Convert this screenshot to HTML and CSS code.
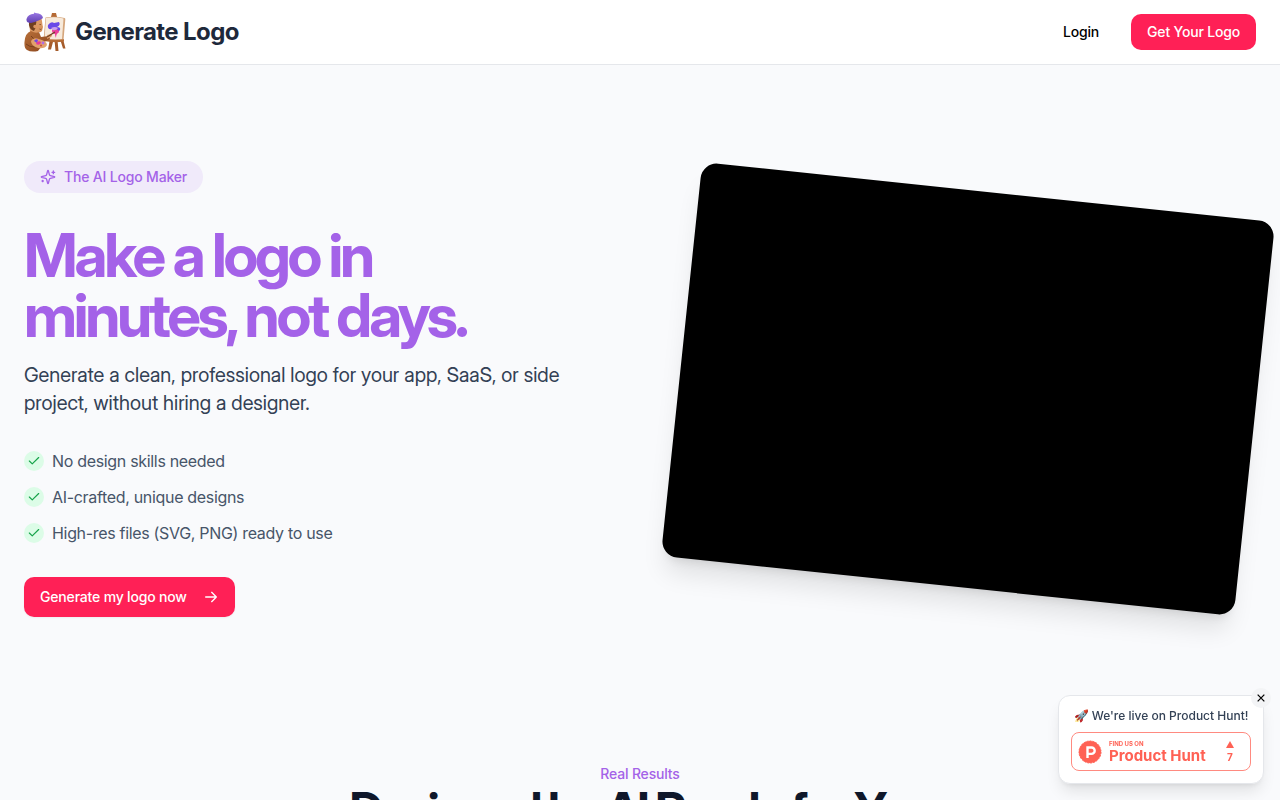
FILE: index.html
```html
<!DOCTYPE html>
<html lang="en">
<head>
<meta charset="utf-8">
<meta name="viewport" content="width=device-width, initial-scale=1">
<title>Generate Logo</title>
<link rel="stylesheet" href="styles.css">
</head>
<body>
<header class="site-header">
  <a class="brand" href="#">
    <svg class="brand-mark" viewBox="0 0 42 40" aria-hidden="true">
      <defs>
        <linearGradient id="beret" x1="0" y1="0" x2="0" y2="1"><stop offset="0" stop-color="#9a78e4"/><stop offset="1" stop-color="#5f3fb0"/></linearGradient>
        <linearGradient id="coat" x1="0" y1="0" x2="1" y2="1"><stop offset="0" stop-color="#b9713a"/><stop offset="1" stop-color="#87421b"/></linearGradient>
        <linearGradient id="skin" x1="0" y1="0" x2="1" y2="1"><stop offset="0" stop-color="#e8ac78"/><stop offset="1" stop-color="#cf8750"/></linearGradient>
      </defs>
      <path d="M27 5h5l1 6-6 1z" fill="#a3592a"/>
      <path d="M28 1h4l1 4h-6z" fill="#b56a35"/>
      <path d="M26 27l-2 10.500h3L29.500 28zM30.500 28l1 11h3l-1-11zM36 27l3 9.500h2.500L39 27z" fill="#a55c2b"/>
      <path d="M21.500 5.500Q31 4 40.500 6q1 0 .8 1.500L39.500 28q-9.500 1.800-20 0z" fill="#d5a67c"/>
      <path d="M22 6q9-1.500 17.500.5L38 27q-8.500 1-17.500-.5z" fill="#f7eadb"/>
      <path d="M20 26.500q10 2 20 .7v2.300q-10 1.500-20.500-.5z" fill="#b56b35"/>
      <path d="M24 13q3-4 6-2l5-1q2 3-2 5 4 0 3 3-2 3-5 1l-3-2q-5 1-4-4z" fill="#6949e8"/>
      <path d="M28 18q4-2 6 0t0 3q-2 1-2 5-1-2-1-4-3 0-3-4z" fill="#eb3f9a"/>
      <path d="M27 16q4-2 7 0-2 3-5 2z" fill="#c9a0eb"/>
      <path d="M5 9q2-4 8-4 5 0 5 4l.5 4 .5 2-1 4q-2 2-4 1l1 4-6 1-3-5z" fill="url(#skin)"/>
      <path d="M5 9l6-1q2 1 1 4-1 2 0 3l-2 4q-6-2-5-10z" fill="#70401f"/>
      <circle cx="11" cy="14.500" r="1.700" fill="#da9461"/>
      <path d="M15.500 12.500h1.400M15.500 17q1 .8 2 0" stroke="#64351d" stroke-width=".7" fill="none"/>
      <path d="M2.500 7Q4 2 10 1.800 10-.2 11.500 1q7 .5 7.500 5-4 3-12 5-5 0-4.500-4z" fill="url(#beret)"/>
      <path d="M7 19q5 3 8 1l2 5 8-1 1 3-8 4q-1 5-4 8-7 1.500-11-1-3-2-2.500-8Q1 21 7 19z" fill="url(#coat)"/>
      <path d="M7 24q4 3 6 8M2 32q3 3 9 3" stroke="#79401e" stroke-width="1" fill="none"/>
      <path d="M23 23l4-1q2 1 0 3l-4 2z" fill="url(#skin)"/>
      <path d="M23 25l8-5" stroke="#714124" stroke-width="1.200"/>
      <path d="M7 29q2-4 8-2 8 2 8 6-2 4-9 3-7-2-7-7z" fill="#e1a16c"/>
      <path d="M10 29q2-3 4-1l-1 3z" fill="#6f4ae5"/>
      <path d="M13 30q4-2 4 1-2 3-5 1z" fill="#e63a99"/>
      <circle cx="19" cy="31" r="1.400" fill="#b06be6"/>
      <circle cx="17" cy="33.500" r="1" fill="#cc4c3e"/>
    </svg>
    <span class="brand-name">Generate Logo</span>
  </a>
  <nav class="site-nav">
    <a class="login" href="#">Login</a>
    <a class="btn btn-nav" href="#">Get Your Logo</a>
  </nav>
</header>

<main>
  <section class="hero">
    <div class="hero-copy">
      <div class="pill">
        <svg class="icon-16" viewBox="0 0 24 24" fill="none" stroke="currentColor" stroke-width="2" stroke-linecap="round" stroke-linejoin="round" aria-hidden="true"><path d="M9.937 15.500A2 2 0 0 0 8.500 14.063l-6.135-1.582a.5.5 0 0 1 0-.962L8.500 9.936A2 2 0 0 0 9.937 8.500l1.582-6.135a.5.5 0 0 1 .963 0L14.063 8.500A2 2 0 0 0 15.500 9.937l6.135 1.581a.5.5 0 0 1 0 .964L15.500 14.063a2 2 0 0 0-1.437 1.437l-1.582 6.135a.5.5 0 0 1-.963 0z"/><path d="M20 3v4M22 5h-4M4 17v2M5 18H3"/></svg>
        The AI Logo Maker
      </div>
      <h1 class="hero-title">Make a logo in minutes, not days.</h1>
      <p class="hero-lead">Generate a clean, professional logo for your app, SaaS, or side project, without hiring a designer.</p>
      <ul class="benefits">
        <li><span class="tick"><svg viewBox="0 0 24 24" aria-hidden="true"><path d="M20 6 9 17l-5-5"/></svg></span>No design skills needed</li>
        <li><span class="tick"><svg viewBox="0 0 24 24" aria-hidden="true"><path d="M20 6 9 17l-5-5"/></svg></span>AI-crafted, unique designs</li>
        <li><span class="tick"><svg viewBox="0 0 24 24" aria-hidden="true"><path d="M20 6 9 17l-5-5"/></svg></span>High-res files (SVG, PNG) ready to use</li>
      </ul>
      <a class="btn btn-cta" href="#">Generate my logo now
        <svg class="icon-16" viewBox="0 0 24 24" fill="none" stroke="currentColor" stroke-width="2" stroke-linecap="round" stroke-linejoin="round" aria-hidden="true"><path d="M4 12h16M13 5l7 7-7 7"/></svg>
      </a>
    </div>
    <div class="hero-video"></div>
  </section>

  <section class="results">
    <p class="eyebrow">Real Results</p>
    <h2 class="results-title">Designed by AI Ready for You</h2>
  </section>
</main>

<aside class="toast">
  <button class="toast-close" type="button" aria-label="Close">
    <svg viewBox="0 0 24 24" fill="none" stroke="currentColor" stroke-width="3" aria-hidden="true"><path d="M4 4l16 16M20 4L4 20"/></svg>
  </button>
  <p class="toast-text">🚀 We're live on Product Hunt!</p>
  <a class="ph-badge" href="#">
    <svg class="ph-mark" viewBox="0 0 24 24" aria-hidden="true"><circle cx="12" cy="12" r="11" fill="#ff6154"/><circle cx="12" cy="12" r="11" fill="none" stroke="#ff6154" stroke-width="1" stroke-dasharray="2 1"/><path d="M9.500 18V7.500h4a3.200 3.200 0 0 1 0 6.400h-4" fill="none" stroke="#fff" stroke-width="2.400"/></svg>
    <span class="ph-label"><span class="ph-small">FIND US ON</span><span class="ph-name">Product Hunt</span></span>
    <span class="ph-votes"><svg viewBox="0 0 8 7" aria-hidden="true"><path d="M4 0l4 7H0z" fill="currentColor"/></svg>7</span>
  </a>
</aside>
</body>
</html>
```
FILE: styles.css
```css
* { box-sizing: border-box; }

body {
  margin: 0;
  background: #f9fafc;
  color: #0f172a;
  font-family: Inter, "Liberation Sans", sans-serif;
  font-size: 16px;
  line-height: 24px;
  letter-spacing: -0.011em;
  overflow-x: hidden;
}

h1, h2, p, ul { margin: 0; padding: 0; }
h1, h2, .hero-lead {
  font-family: "Inter Display", "Inter Variable", Inter, "Liberation Sans", sans-serif;
  font-variation-settings: "opsz" 32;
}
a { color: inherit; text-decoration: none; }
svg { display: block; flex: none; }
.icon-16 { width: 16px; height: 16px; }

.site-header {
  display: flex;
  align-items: center;
  justify-content: space-between;
  height: 65px;
  padding: 0 24px;
  background: #fff;
  border-bottom: 1px solid #e5e7eb;
}

.brand { display: flex; align-items: center; gap: 9px; }
.brand-mark { width: 42px; height: 40px; }
.brand-name {
  color: #1e293b;
  font-size: 24px;
  line-height: 32px;
  font-weight: 700;
  letter-spacing: -0.025em;
}

.site-nav { display: flex; align-items: center; gap: 32px; font-size: 14px; font-weight: 500; line-height: 20px; }
.login { color: #000; }

.btn {
  display: inline-flex;
  align-items: center;
  gap: 16px;
  padding: 0 16px;
  border-radius: 10px;
  background: #ff2056;
  color: #fff;
  font-size: 14px;
  line-height: 20px;
  font-weight: 500;
}
.btn-nav { height: 36px; }
.btn-cta { height: 40px; box-shadow: 0 1px 2px rgba(0, 0, 0, .05); }

.hero {
  display: grid;
  grid-template-columns: 1fr 1fr;
  gap: 80px;
  align-items: center;
  padding: 96px 24px;
}
.hero-copy { display: flex; flex-direction: column; align-items: flex-start; }

.pill {
  display: flex;
  align-items: center;
  gap: 8px;
  padding: 6px 16px;
  border-radius: 16px;
  background: #f0eafa;
  color: #a462e8;
  font-size: 14px;
  line-height: 20px;
  font-weight: 500;
}
.hero-title {
  max-width: 512px;
  margin-top: 32px;
  color: #a462e8;
  font-size: 60px;
  line-height: 60px;
  font-weight: 700;
  letter-spacing: -0.055em;
}
.hero-lead {
  margin-top: 16px;
  color: #334155;
  font-size: 20px;
  line-height: 28px;
  letter-spacing: normal;
}
.benefits {
  display: grid;
  gap: 12px;
  margin: 32px 0;
  list-style: none;
  color: #475569;
  letter-spacing: -0.02em;
}
.benefits li { display: flex; align-items: center; gap: 8px; }
.tick {
  display: grid;
  place-items: center;
  width: 20px;
  height: 20px;
  border-radius: 50%;
  background: #dcfce7;
}
.tick svg {
  width: 14px;
  height: 14px;
  fill: none;
  stroke: #16a34a;
  stroke-width: 2;
  stroke-linecap: round;
  stroke-linejoin: round;
}

.hero-video {
  aspect-ratio: 16 / 11;
  border-radius: 16px;
  background: #000;
  transform: rotate(6deg);
  box-shadow: 0 20px 25px -5px rgba(0, 0, 0, .1), 0 8px 10px -6px rgba(0, 0, 0, .1);
}

.results { padding: 49px 24px; text-align: center; }
.eyebrow { color: #a462e8; font-size: 14px; line-height: 24px; font-weight: 500; }
.results-title { font-size: 48px; line-height: 48px; font-weight: 700; letter-spacing: -0.05em; }

.toast {
  position: fixed;
  right: 16px;
  bottom: 16px;
  width: 206px;
  padding: 12px;
  border: 1px solid #e5e7eb;
  border-radius: 12px;
  background: #fff;
  box-shadow: 0 10px 15px -3px rgba(0, 0, 0, .1), 0 4px 6px -4px rgba(0, 0, 0, .1);
  letter-spacing: normal;
}
.toast-close {
  position: absolute;
  top: -8px;
  right: -8px;
  display: grid;
  place-items: center;
  width: 20px;
  height: 20px;
  padding: 0;
  border: 0;
  border-radius: 50%;
  background: #f3f4f6;
  color: #000;
}
.toast-close svg { width: 10px; height: 10px; }
.toast-text {
  margin-bottom: 8px;
  color: #334155;
  font-size: 12px;
  line-height: 16px;
  font-weight: 500;
  text-align: center;
  white-space: nowrap;
}
.ph-badge {
  display: flex;
  align-items: center;
  height: 39px;
  padding: 0 16px 0 6px;
  border: 1px solid #ff8a80;
  border-radius: 8px;
  color: #ff6154;
  font-weight: 700;
}
.ph-mark { width: 24px; height: 24px; }
.ph-label { display: grid; flex: 1; margin-left: 7px; white-space: nowrap; }
.ph-small { font-size: 6px; line-height: 7px; }
.ph-name { font-size: 15px; line-height: 17px; }
.ph-votes { display: grid; justify-items: center; gap: 4px; font-size: 10px; line-height: 10px; }
.ph-votes svg { width: 8px; height: 7px; }
```
